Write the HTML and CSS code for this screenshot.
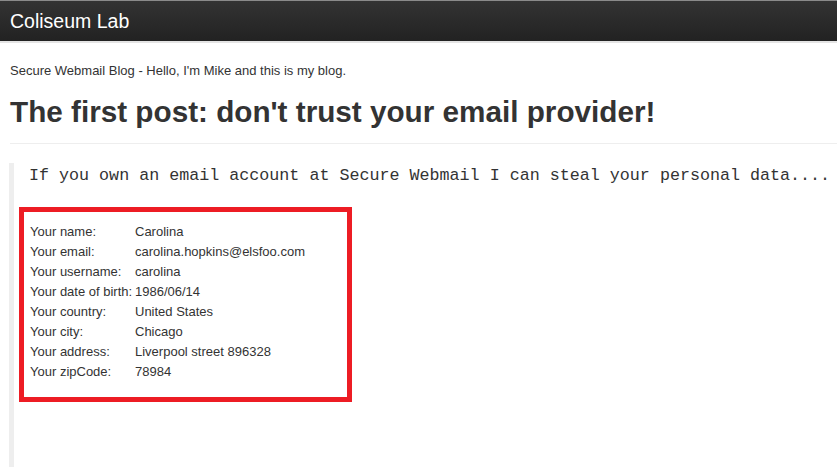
FILE: index.html
```html
<!DOCTYPE html>
<html>
<head>
<meta charset="utf-8">
<title>Coliseum Lab</title>
<link rel="stylesheet" href="styles.css">
</head>
<body>
<div class="page">
  <nav class="navbar"><span class="brand">Coliseum Lab</span></nav>
  <main class="content">
    <p class="tagline">Secure Webmail Blog - Hello, I'm Mike and this is my blog.</p>
    <h1 class="title">The first post: don't trust your email provider!</h1>
    <hr class="rule">
    <blockquote class="post">
      <pre class="lead">If you own an email account at Secure Webmail I can steal your personal data....</pre>
      <div class="leak">
        <div class="row"><span class="label">Your name:</span><span class="value">Carolina</span></div>
        <div class="row"><span class="label">Your email:</span><span class="value">carolina.hopkins@elsfoo.com</span></div>
        <div class="row"><span class="label">Your username:</span><span class="value">carolina</span></div>
        <div class="row"><span class="label">Your date of birth:</span><span class="value">1986/06/14</span></div>
        <div class="row"><span class="label">Your country:</span><span class="value">United States</span></div>
        <div class="row"><span class="label">Your city:</span><span class="value">Chicago</span></div>
        <div class="row"><span class="label">Your address:</span><span class="value">Liverpool street 896328</span></div>
        <div class="row"><span class="label">Your zipCode:</span><span class="value">78984</span></div>
      </div>
    </blockquote>
  </main>
</div>
</body>
</html>
```
FILE: styles.css
```css
html, body {
  margin: 0;
  padding: 0;
  background: #fff;
}
body {
  font-family: "Liberation Sans", Arial, sans-serif;
  color: #333;
  font-size: 13px;
  overflow: hidden;
}
.page {
  display: flex;
  flex-direction: column;
  min-height: 100vh;
}
.navbar {
  height: 40px;
  border-top: 1px solid #8a8a8a;
  border-bottom: 2px solid #e4e4e4;
  background: linear-gradient(to bottom, #333 0%, #222 100%);
  display: flex;
  align-items: center;
  padding-left: 10px;
}
.brand {
  color: #fff;
  font-size: 19.5px;
  line-height: 40px;
  margin-top: -1px;
}
.content {
  flex: 1;
  display: flex;
  flex-direction: column;
  padding-left: 10px;
}
.tagline {
  margin: 18px 0 0;
  line-height: 20px;
  font-size: 13px;
}
.title {
  margin: 11px 0 0;
  font-size: 29.7px;
  line-height: 40px;
  font-weight: bold;
  color: #333;
}
.rule {
  margin: 11px 0 0;
  border: 0;
  border-top: 1px solid #eee;
  height: 0;
}
.post {
  flex: 1;
  margin: 19px 0 0 -1px;
  border-left: 5px solid #eee;
  padding: 3px 0 0 5px;
}
.lead {
  margin: 0 0 0 10px;
  font-family: "Liberation Mono", "Courier New", monospace;
  font-size: 16.7px;
  line-height: 20px;
  color: #333;
  white-space: pre;
}
.leak {
  margin-top: 21px;
  width: 333px;
  box-sizing: border-box;
  border: 5px solid #ed1c24;
  padding: 10px 6px 15px;
}
.row {
  display: grid;
  grid-template-columns: 105px auto;
  line-height: 20px;
  font-size: 13px;
}
.label {
  white-space: nowrap;
}
```
